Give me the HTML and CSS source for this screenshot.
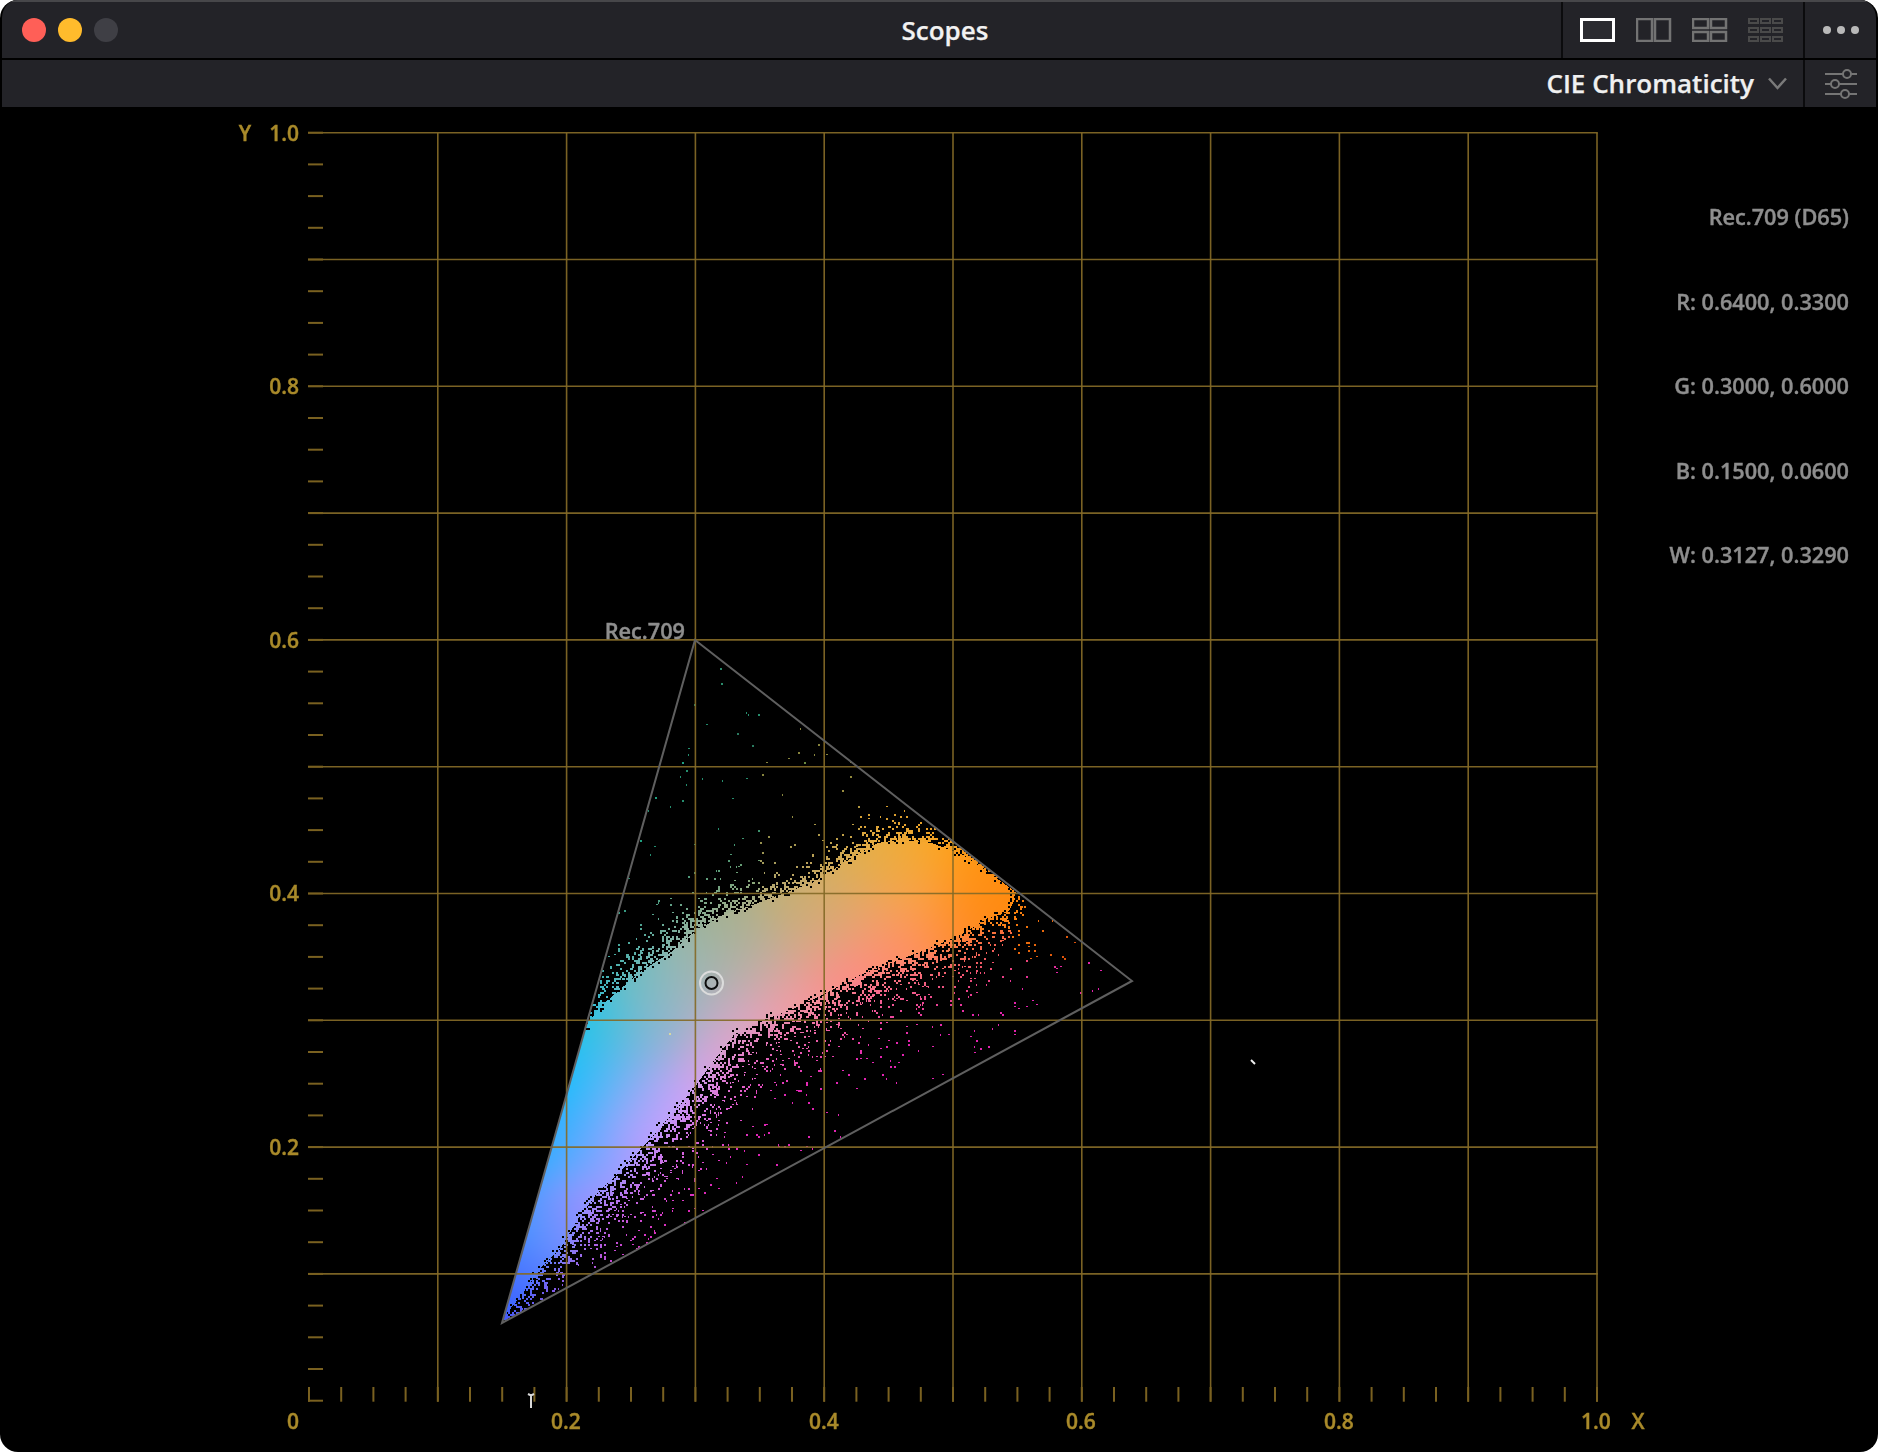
FILE: index.html
```html
<!DOCTYPE html>
<html lang="en">
<head>
<meta charset="utf-8">
<title>Scopes</title>
<link rel="stylesheet" href="styles.css">
</head>
<body>
<main class="win">
  <header class="titlebar">
    <div class="lights">
      <span class="light light-red"></span>
      <span class="light light-yellow"></span>
      <span class="light light-off"></span>
    </div>
    <h1 class="title">Scopes</h1>
    <div class="title-tools">
      <div class="views">
        <svg class="view-icon" width="36" height="24" viewBox="0 0 36 24"><rect class="v-on" x="1.5" y="1.5" width="32" height="21"/></svg>
        <svg class="view-icon" width="36" height="24" viewBox="0 0 36 24"><path class="v-mid" d="M1 1h15v22H1zM19 1h15v22H19z"/></svg>
        <svg class="view-icon" width="36" height="24" viewBox="0 0 36 24"><path class="v-mid" d="M1 1h15v9H1zM19 1h15v9H19zM1 14h15v9H1zM19 14h15v9H19z"/></svg>
        <svg class="view-icon" width="36" height="24" viewBox="0 0 36 24"><path class="v-dim" d="M1 1h9v4H1zM13 1h9v4h-9zM25 1h9v4h-9zM1 10h9v4H1zM13 10h9v4h-9zM25 10h9v4h-9zM1 19h9v4H1zM13 19h9v4h-9zM25 19h9v4h-9z"/></svg>
      </div>
      <div class="more"><span class="dot"></span><span class="dot"></span><span class="dot"></span></div>
    </div>
  </header>
  <div class="toolbar">
    <div class="select">
      <span class="select-label">CIE Chromaticity</span>
      <svg class="chevron" width="19" height="13" viewBox="0 0 19 13"><path d="M1 1.5l8.500 9.500L18 1.500"/></svg>
    </div>
    <div class="settings">
      <svg width="34" height="30" viewBox="0 0 34 30"><g class="sliders"><path d="M1 5h18m8 0h6M1 15h6m8 0h18M1 25h16m8 0h8"/><circle cx="23" cy="5" r="4"/><circle cx="11" cy="15" r="4"/><circle cx="21" cy="25" r="4"/></g></svg>
    </div>
  </div>
  <section class="plot">
    <canvas id="cloud" class="cloud" width="1874" height="1343"></canvas>
    <svg id="chart" class="chart" viewBox="2 107 1874 1343" width="1874" height="1343">
      <g id="grid"></g>
      <path class="gamut" d="M695 640 1132 981 502 1323Z"/>
      <circle class="wp-outer" cx="711.500" cy="983" r="11.500"/>
      <circle class="wp-inner" cx="711.500" cy="983" r="6"/>
      <path class="stray" d="M1251 1060l4 4"/>
      <path class="cursor" d="M528 1394l3 1.500 3-1.500M531 1395v13"/>
      <g class="axis">
        <text x="245" y="141" class="mid">Y</text>
        <text x="299" y="141" class="end">1.0</text>
        <text x="299" y="394" class="end">0.8</text>
        <text x="299" y="648" class="end">0.6</text>
        <text x="299" y="901" class="end">0.4</text>
        <text x="299" y="1155" class="end">0.2</text>
        <text x="293" y="1429" class="mid">0</text>
        <text x="566" y="1429" class="mid">0.2</text>
        <text x="824" y="1429" class="mid">0.4</text>
        <text x="1081" y="1429" class="mid">0.6</text>
        <text x="1339" y="1429" class="mid">0.8</text>
        <text x="1596" y="1429" class="mid">1.0</text>
        <text x="1638" y="1429" class="mid">X</text>
      </g>
      <text class="gamut-name" x="685" y="639">Rec.709</text>
    </svg>
    <aside class="legend">
      <p>Rec.709 (D65)</p>
      <p>R: 0.6400, 0.3300</p>
      <p>G: 0.3000, 0.6000</p>
      <p>B: 0.1500, 0.0600</p>
      <p>W: 0.3127, 0.3290</p>
    </aside>
  </section>
</main>
<script src="app.js"></script>
</body>
</html>
```
FILE: styles.css
```css
* { box-sizing: border-box; }
html, body { margin: 0; padding: 0; background: #fff; }
body { width: 1878px; height: 1452px; overflow: hidden; font-family: "Open Sans", "Noto Sans", sans-serif; }
.win {
  width: 1878px; height: 1452px;
  display: flex; flex-direction: column;
  background: #000; border: 2px solid #000; border-top: 0;
  border-radius: 18px; overflow: hidden;
}
.titlebar {
  height: 58px; flex: none;
  display: flex; align-items: stretch;
  background: #232328;
  border-top: 2px solid #47474a;
}
.lights { flex: 1 1 0; display: flex; align-items: center; gap: 12px; padding-left: 20px; }
.light { width: 24px; height: 24px; border-radius: 50%; }
.light-red { background: #ff5f57; }
.light-yellow { background: #ffbb2c; }
.light-off { background: #3f3f45; }
.title {
  margin: 0 8px 0 0; align-self: center;
  font-size: 26px; font-weight: 600; color: #f2f2f2; line-height: 1;
  -webkit-text-stroke: 0.25px currentColor;
}
.title-tools { flex: 1 1 0; display: flex; justify-content: flex-end; align-items: stretch; }
.views {
  width: 242px; display: flex; align-items: center; gap: 20px;
  padding-left: 17px; border-left: 2px solid #0b0b0d;
}
.view-icon { display: block; flex: none; }
.v-on { fill: #2b2b30; stroke: #fff; stroke-width: 3; }
.v-mid { fill: none; stroke: #737373; stroke-width: 2.500; }
.v-dim { fill: none; stroke: #4a4a4a; stroke-width: 2; }
.more {
  width: 73px; display: flex; align-items: center; justify-content: center; gap: 6px;
  border-left: 2px solid #0b0b0d;
}
.dot { width: 8px; height: 8px; border-radius: 50%; background: #b9b9b9; }
.toolbar {
  height: 47px; flex: none; margin-top: 2px;
  display: flex; justify-content: flex-end; align-items: stretch;
  background: #232328;
}
.select { display: flex; align-items: center; gap: 14px; padding-right: 16px; }
.select-label {
  font-size: 26px; font-weight: 600; color: #f0f0f0; position: relative; top: -1px;
  -webkit-text-stroke: 0.25px currentColor;
}
.chevron { display: block; }
.chevron path { fill: none; stroke: #7a7a7a; stroke-width: 2.500; }
.settings {
  width: 73px; display: flex; align-items: center; justify-content: center;
  border-left: 2px solid #0b0b0d;
}
.sliders { fill: none; stroke: #757575; stroke-width: 2; }
.plot { flex: 1; position: relative; display: flex; justify-content: flex-end; background: #000; }
.cloud { position: absolute; left: 0; top: 0; filter: blur(0.4px); }
.chart { position: absolute; left: 0; top: 0; display: block; }
.grid-line { stroke: #846a27; stroke-width: 1.600; opacity: .92; fill: none; }
.tick { stroke: #7a6120; stroke-width: 2; fill: none; }
.gamut { fill: none; stroke: #5f5f5f; stroke-width: 2; stroke-linejoin: miter; }
.wp-outer { fill: none; stroke: #dcdcdc; stroke-width: 2; }
.wp-inner { fill: none; stroke: #0d0d0d; stroke-width: 2; }
.stray { stroke: #f0f0f0; stroke-width: 2; }
.cursor { stroke: #d8d8d8; stroke-width: 2; fill: none; }
.axis text {
  font-family: "Open Sans", sans-serif; font-size: 21px; font-weight: 600;
  fill: #a98a2a; stroke: #a98a2a; stroke-width: 0.4px;
}
.axis .end { text-anchor: end; }
.axis .mid { text-anchor: middle; }
.gamut-name {
  font-family: "Open Sans", sans-serif; font-size: 21.700px; font-weight: 600;
  fill: #8e8e8e; stroke: #8e8e8e; stroke-width: 0.4px; text-anchor: end;
}
.legend {
  position: relative; padding: 96px 27px 0 0;
  display: flex; flex-direction: column; align-items: flex-end; gap: 56.5px;
}
.legend p {
  margin: 0; height: 28px; line-height: 28px;
  font-size: 21.700px; font-weight: 600; color: #8e8e8e; white-space: nowrap;
  -webkit-text-stroke: 0.4px currentColor;
}
```
FILE: app.js
```js
(function () {
  var OX = 2, OY = 107;
  var NS = 'http://www.w3.org/2000/svg';
  var x0 = 309, sx = 128.8, y0 = 1400.7, sy = 126.8;

  /* grid and ticks */
  var grid = document.getElementById('grid');
  function line(cls, a, b, c, d) {
    var l = document.createElementNS(NS, 'line');
    l.setAttribute('class', cls);
    l.setAttribute('x1', a); l.setAttribute('y1', b);
    l.setAttribute('x2', c); l.setAttribute('y2', d);
    grid.appendChild(l);
  }
  for (var i = 1; i <= 10; i++) {
    var gx = x0 + sx * i, gy = y0 - sy * i;
    line('grid-line', gx, 132.7, gx, 1401.7);
    line('grid-line', 308, gy, 1597.8, gy);
  }
  for (var t = 0; t <= 40; t++) {
    var tx = x0 + sx * t / 4, ty = y0 - sy * t / 4;
    line('tick', tx, 1387, tx, 1401.700);
    line('tick', 308, ty, 323, ty);
  }

  /* cloud */
  var cv = document.getElementById('cloud');
  var ctx = cv.getContext('2d');
  var W = cv.width, H = cv.height;
  var img = ctx.createImageData(W, H);
  var px = img.data;

  function Z(zx, zy) { return [480 + zx / 2.613, 800 + zy / 3.03]; }
  var topRaw = [[275,690],[310,630],[370,570],[420,520],[500,460],[560,400],[640,345],[720,315],[800,280],[870,250],[930,205],[980,170],[1040,130],[1100,120],[1180,130],[1260,165],[1330,220],[1395,275]];
  var lowRaw = [[1400,295],[1380,340],[1320,350],[1250,400],[1170,440],[1080,480],[990,520],[900,575],[820,620],[720,665],[660,700],[600,790],[550,870],[490,950],[430,1030],[350,1130]];
  var top = topRaw.map(function (p) { return Z(p[0], p[1]); });
  var low = lowRaw.map(function (p, i) { var q = Z(p[0], p[1]); return i < 2 ? q : [q[0] + 2, q[1] + 3]; });
  low = low.concat([[598,1192],[578,1219],[561,1248],[541,1268],[520,1297],[507,1313],[502,1323]]);
  var poly = top.concat(low);
  var nTop = top.length;

  var ctl = [
    [75,1498,'2a78ff'],[120,1300,'18a0ff'],[180,1050,'10b0ff'],[240,830,'00bfff'],[280,680,'18c8e8'],
    [200,1300,'60a0ff'],[260,1050,'50b0ff'],[320,850,'60b8f8'],[360,700,'50c0d8'],[420,560,'60c0c0'],
    [300,1100,'80a8ff'],[400,900,'90a8f8'],[450,750,'90b0e0'],[520,600,'a0b4c0'],[560,480,'8cb8a8'],
    [150,1430,'7080ff'],[220,1300,'a880ff'],[300,1210,'c088ff'],[400,1070,'cc98ff'],[500,920,'d8a0ff'],[590,790,'e0a0e0'],[680,690,'f0a0c8'],[800,610,'f898a0'],[950,520,'ff8a88'],[1100,450,'ff8c68'],[1250,385,'ff8a30'],[1370,330,'ff8510'],
    [620,620,'b8b0c0'],[720,520,'c8aca8'],[850,420,'d8a888'],[1000,350,'f0a070'],[1150,300,'ffa050'],[1300,270,'ff9020'],
    [640,370,'a0b088'],[800,300,'c0b070'],[950,210,'d8b055'],[1050,150,'e8b040'],[1180,150,'ffa818'],[1300,215,'ff9808'],[1390,285,'ff8805'],[1100,220,'eca848'],[900,310,'d0ac70'],[700,420,'b0b098'],[600,500,'a8b4b0'],[480,640,'8cb8c8']
  ].map(function (c) {
    var p = Z(c[0], c[1]);
    return [p[0], p[1], parseInt(c[2].slice(0,2),16), parseInt(c[2].slice(2,4),16), parseInt(c[2].slice(4,6),16)];
  });
  ctl.push([503, 1322, 48, 48, 255]);
  ctl.push([520, 1290, 96, 112, 255]);
  ctl.push([510, 1290, 48, 112, 255]);

  /* smooth kernel regression over the sampled colours */
  var SIG = 2 * 30 * 30;
  function colorAt(x, y) {
    var r = 0, g = 0, b = 0, s = 1e-9;
    for (var i = 0; i < ctl.length; i++) {
      var c = ctl[i], dx = x - c[0], dy = y - c[1];
      var w = Math.exp(-(dx * dx + dy * dy) / SIG) + 1e-7 / (dx * dx + dy * dy + 1);
      r += c[2] * w; g += c[3] * w; b += c[4] * w; s += w;
    }
    return [r / s, g / s, b / s];
  }
  function inside(x, y, P) {
    var c = false;
    for (var i = 0, j = P.length - 1; i < P.length; j = i++) {
      var a = P[i], b = P[j];
      if ((a[1] > y) !== (b[1] > y) && x < (b[0] - a[0]) * (y - a[1]) / (b[1] - a[1]) + a[0]) c = !c;
    }
    return c;
  }
  var tri = [[695.5,641],[1131,981],[503,1322]];
  function nearest(x, y) {
    var best = 1e12, idx = 0;
    for (var i = 0; i < poly.length - 1; i++) {
      var a = poly[i], b = poly[i + 1];
      var ux = b[0] - a[0], uy = b[1] - a[1];
      var t = ((x - a[0]) * ux + (y - a[1]) * uy) / (ux * ux + uy * uy);
      t = t < 0 ? 0 : t > 1 ? 1 : t;
      var dx = x - a[0] - ux * t, dy = y - a[1] - uy * t;
      var d = dx * dx + dy * dy;
      if (d < best) { best = d; idx = i; }
    }
    return [Math.sqrt(best), idx];
  }
  function put(x, y, c) {
    var X = x - OX, Y = y - OY;
    if (X < 0 || Y < 0 || X >= W || Y >= H) return;
    var o = (Y * W + X) * 4;
    px[o] = c[0]; px[o + 1] = c[1]; px[o + 2] = c[2]; px[o + 3] = 255;
  }
  function mix(a, b, t) { return [a[0] + (b[0] - a[0]) * t, a[1] + (b[1] - a[1]) * t, a[2] + (b[2] - a[2]) * t]; }

  var seed = 90210;
  function rnd() {
    seed = (seed + 0x6D2B79F5) | 0;
    var t = Math.imul(seed ^ (seed >>> 15), 1 | seed);
    t = (t + Math.imul(t ^ (t >>> 7), 61 | t)) ^ t;
    return ((t ^ (t >>> 14)) >>> 0) / 4294967296;
  }
  /* clump noise lattice */
  var LAT = 7, lat = {};
  function latv(i, j) { var k = i + ',' + j; if (lat[k] === undefined) lat[k] = rnd(); return lat[k]; }
  function noise(x, y) {
    var fx = x / LAT, fy = y / LAT, i = Math.floor(fx), j = Math.floor(fy), u = fx - i, v = fy - j;
    return (latv(i,j)*(1-u)+latv(i+1,j)*u)*(1-v) + (latv(i,j+1)*(1-u)+latv(i+1,j+1)*u)*v;
  }
  function ramp(d, stops) {
    if (d <= stops[0][0]) return stops[0][1];
    for (var i = 1; i < stops.length; i++) {
      if (d < stops[i][0]) {
        var a = stops[i - 1], b = stops[i];
        return a[1] + (b[1] - a[1]) * (d - a[0]) / (b[0] - a[0]);
      }
    }
    return stops[stops.length - 1][1];
  }
  var topRamp = [[0,.6],[5,.36],[12,.15],[22,.06],[35,.018],[60,.004],[400,.001]];
  var lowRamp = [[0,.68],[6,.46],[15,.29],[30,.15],[50,.07],[75,.028],[110,.012],[400,.007]];

  /* solid core */
  for (var y = 690; y < 1330; y++) {
    for (var x = 495; x < 1030; x++) {
      if (inside(x + .5, y + .5, poly)) put(x, y, colorAt(x, y));
    }
  }
  /* speckle, on a 2px lattice */
  for (var cy = 640; cy < 1326; cy += 2) {
    for (var cx = 500; cx < 1134; cx += 2) {
      if (!inside(cx + 1, cy + 1, tri)) continue;
      var isIn = inside(cx + 1, cy + 1, poly);
      var n = nearest(cx + 1, cy + 1);
      var d = n[0], isTop = n[1] < nTop - 1;
      if (isIn) {
        if (d < 4 && rnd() < .16) {
          for (var a = 0; a < 2; a++) for (var b = 0; b < 2; b++) put(cx + a, cy + b, [0, 0, 0]);
        }
        continue;
      }
      var scale = 1;
      if (!isTop && cx > 980) scale = 0.6;
      if (!isTop && cy > 1260) scale = 0.55;
      var base = ramp(d / scale, isTop ? topRamp : lowRamp);
      if (!isTop && cx > 1005 && cy < 930) base *= 0.4;
      if (isTop && cx < 780 && d > 8) base *= 1.8;
      var nn = noise(cx, cy);
      var p = d < 60 ? base * (0.4 + 1.2 * nn) : base;
      if (rnd() > p) continue;
      var c = colorAt(cx, cy);
      var f = Math.min(1, d / 80);
      var tint;
      if (isTop) tint = cx < 760 ? [30, 140, 110] : (cx < 860 ? [130, 130, 60] : [190, 140, 30]);
      else if (cx > 1010 && cy < 960) tint = [215, 75, 10];
      else if (cx > 950 && cy < 930) tint = [220, 90, 50];
      else tint = [225, 30, 180];
      c = mix(c, tint, .05 + .9 * f);
      var w = 2, h = 2;
      if (d < 24) {
        if (rnd() < .2) w = 3; else if (rnd() < .12) h = 3;
      } else if (rnd() < .5) {
        w = 1 + (rnd() < .5 ? 1 : 0); h = w === 1 ? 2 : 1;
      }
      for (var ax = 0; ax < w; ax++) for (var ay = 0; ay < h; ay++) put(cx + ax, cy + ay, c);
    }
  }
  /* lone points near the green primary */
  [[720,668,'2a8a6a'],[721,683,'2a8a6a'],[737,733,'2a7a60'],[752,745,'2a7a60'],[804,762,'6a8a40'],[655,797,'20a080'],[682,762,'20a080'],[640,840,'20a080'],[669,1033,'d8d8a0']].forEach(function (q) {
    var cc = [parseInt(q[2].slice(0,2),16), parseInt(q[2].slice(2,4),16), parseInt(q[2].slice(4,6),16)];
    put(q[0], q[1], cc); put(q[0] + 1, q[1], cc); put(q[0], q[1] + 1, cc); put(q[0] + 1, q[1] + 1, cc);
  });
  ctx.putImageData(img, 0, 0);
})();
```
